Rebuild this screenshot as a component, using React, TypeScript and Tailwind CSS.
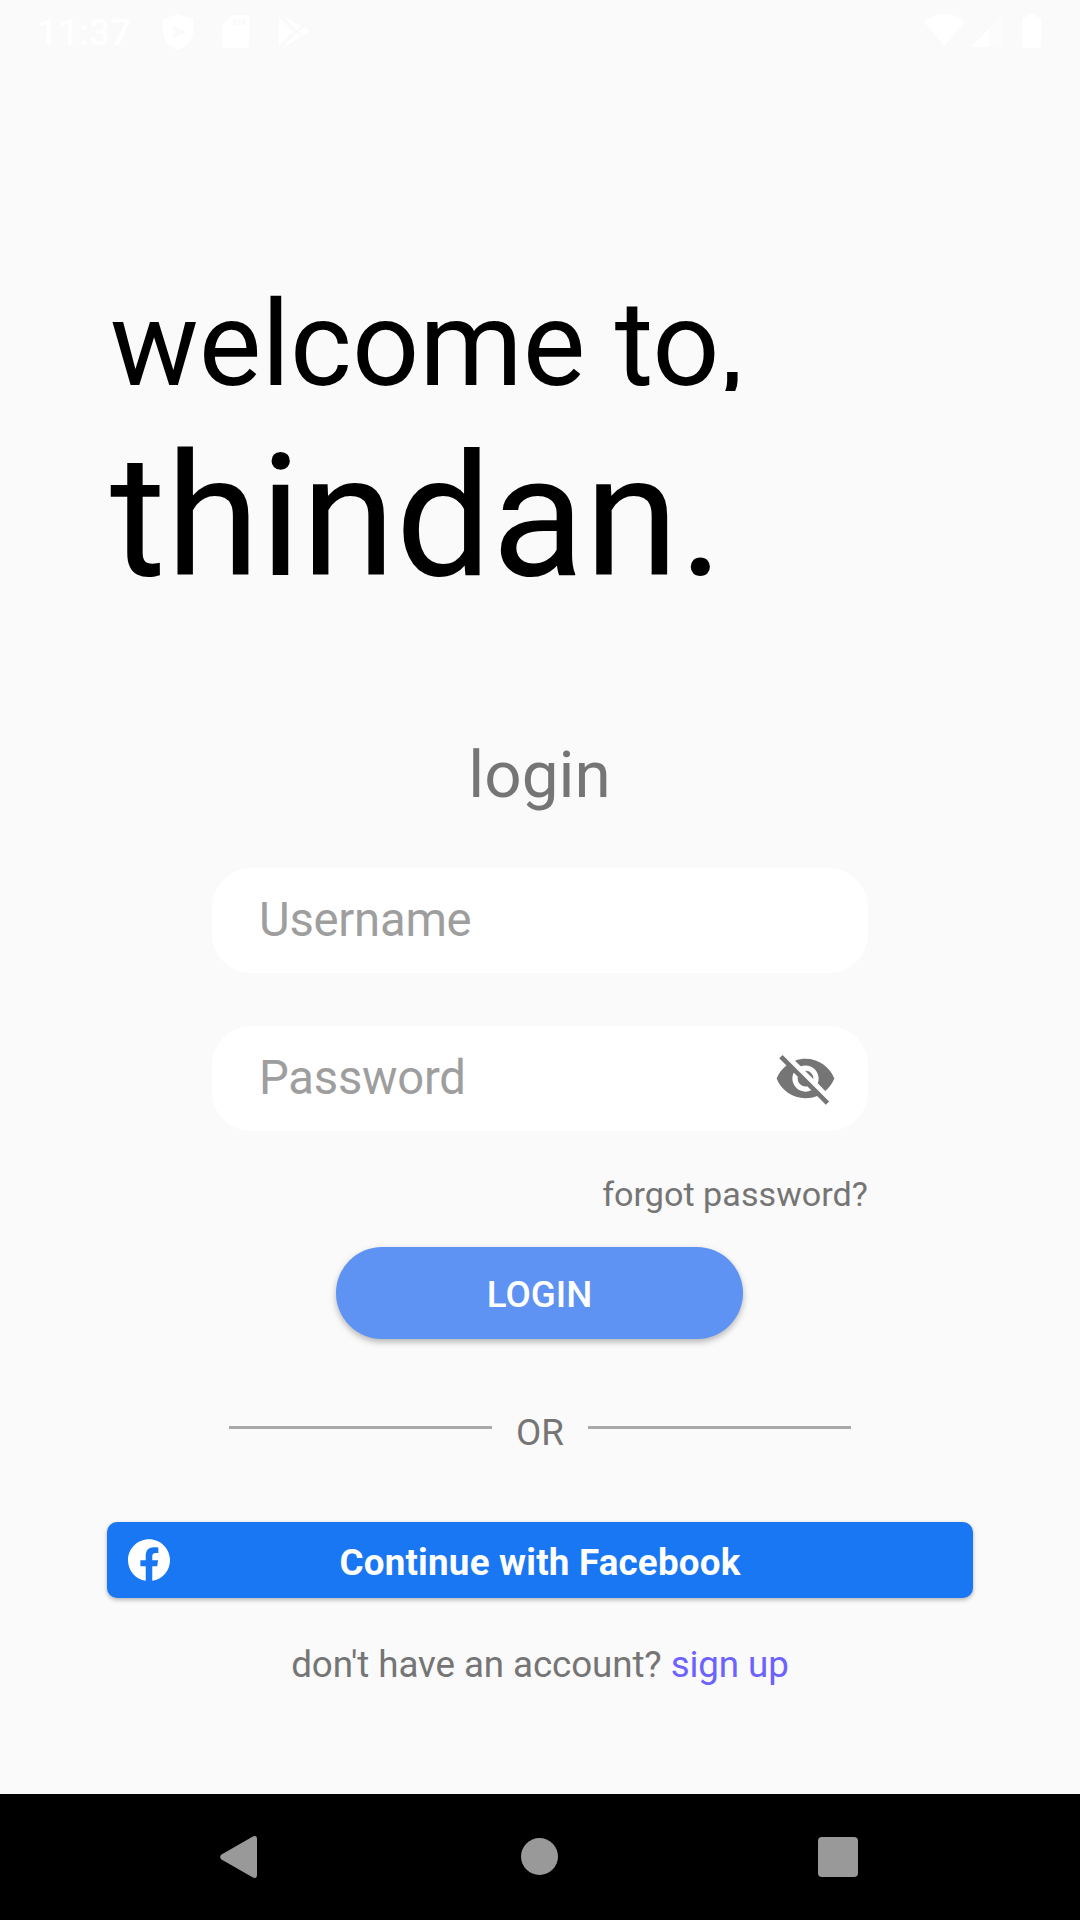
import React from "react";

function StatusBar() {
  return (
    <header className="flex h-[63px] items-start justify-between pl-[37px] pr-[39px] text-white">
      <div className="flex items-start">
        <span className="mt-[12px] w-[95px] whitespace-nowrap text-[36.75px] font-medium leading-[42px] tracking-[0.25px]">11:37</span>
        <svg className="ml-[31px] mt-[14px]" width="30" height="36" viewBox="0 0 30 36" fill="currentColor">
          <path fillRule="evenodd" d="M15 0 30 5.5V17c0 9-6.5 16-15 19C6.500 33 0 26 0 17V5.500ZM10 11.500v13L23.500 18Z" />
        </svg>
        <svg className="ml-[29px] mt-[15px]" width="27" height="33" viewBox="0 0 27 33" fill="currentColor">
          <path fillRule="evenodd" d="M10 0H24a3 3 0 0 1 3 3V30a3 3 0 0 1-3 3H3a3 3 0 0 1-3-3V10ZM11 4v6.500h3V4ZM15.700 4v6.500h3V4ZM20.400 4v6.500h3V4Z" />
        </svg>
        <svg className="ml-[30px] mt-[15px]" width="32" height="33" viewBox="0 0 32 33" fill="currentColor">
          <path d="M0 2.500 14.500 16.500 0 30.500ZM3 0 22 11.300 17.500 15.300ZM24 12.300 28.500 14.500Q31 16.500 28.500 18.500L24 20.700 19.300 16.500ZM3 33 22 21.700 17.500 17.700Z" />
        </svg>
      </div>
      <div className="flex items-start">
        <svg className="mt-[14px]" width="41" height="32" viewBox="0 0 41 32" fill="currentColor">
          <path d="M0 7.500C12-2.500 29-2.500 41 7.500L20.500 32Z" />
        </svg>
        <svg className="ml-[6px] mt-[15px]" width="31" height="32" viewBox="0 0 31 32" fill="currentColor">
          <path fillOpacity="0.35" d="M31 0V32H0Z" />
          <path d="M18 13.400V32H0Z" />
        </svg>
        <svg className="ml-[20px] mt-[14px]" width="19" height="34" viewBox="0 0 19 34" fill="currentColor">
          <path d="M5 0h9v3.500H17a2 2 0 0 1 2 2V32a2 2 0 0 1-2 2H2a2 2 0 0 1-2-2V5.500a2 2 0 0 1 2-2h3Z" />
        </svg>
      </div>
    </header>
  );
}

function EyeOffIcon() {
  return (
    <svg width="63" height="63" viewBox="0 0 24 24" fill="#757575">
      <path d="M12 7c2.760 0 5 2.240 5 5 0 .650-.130 1.260-.360 1.830l2.920 2.920c1.510-1.260 2.700-2.890 3.430-4.750-1.730-4.390-6-7.500-11-7.500-1.400 0-2.740.250-3.980.700l2.160 2.160C10.740 7.130 11.350 7 12 7zM2 4.270l2.280 2.280.460.460C3.080 8.300 1.780 10.020 1 12c1.730 4.390 6 7.500 11 7.500 1.550 0 3.030-.300 4.380-.840l.420.420L19.730 22 21 20.730 3.270 3 2 4.270zM7.530 9.800l1.550 1.550c-.050.210-.080.430-.080.650 0 1.660 1.340 3 3 3 .220 0 .440-.030.650-.080l1.550 1.550c-.670.330-1.410.530-2.200.530-2.760 0-5-2.240-5-5 0-.790.200-1.530.530-2.200zm4.310-.780l3.150 3.150.020-.160c0-1.660-1.340-3-3-3l-.170.010z" />
    </svg>
  );
}

function FacebookIcon() {
  return (
    <svg width="42" height="42" viewBox="0 0 24 24" fill="white">
      <path d="M24 12.073c0-6.627-5.373-12-12-12s-12 5.373-12 12c0 5.990 4.388 10.954 10.125 11.854v-8.385H7.078v-3.470h3.047V9.430c0-3.007 1.792-4.669 4.533-4.669 1.312 0 2.686.235 2.686.235v2.953H15.830c-1.491 0-1.956.925-1.956 1.874v2.250h3.328l-.532 3.470h-2.796v8.385C19.612 23.027 24 18.062 24 12.073z" />
    </svg>
  );
}

function Field({ label, children }: { label: string; children?: React.ReactNode }) {
  return (
    <div className="flex h-[105px] w-[656px] items-center justify-between rounded-[39px] bg-white pl-[47px] pr-[31px]">
      <span className="mb-[2px] text-[47.25px] leading-[56px] tracking-[-0.25px] text-[#9e9e9e]">{label}</span>
      {children}
    </div>
  );
}

export default function App() {
  return (
    <div className="flex h-[1920px] w-[1080px] flex-col overflow-hidden bg-[#fafafa] font-['Roboto',sans-serif] text-[#757575]">
      <StatusBar />
      <main className="flex flex-1 flex-col items-center">
        <div className="mt-[223px] w-full pl-[110px] text-black">
          <h1 className="h-[105px] overflow-hidden whitespace-nowrap text-[118.125px] leading-[118px]">welcome to,</h1>
          <p className="mt-[41px] whitespace-nowrap text-[170.625px] leading-[170px]">thindan.</p>
        </div>
        <h2 className="mr-[1px] mt-[133px] text-[65.625px] leading-[80px]">login</h2>
        <div className="mt-[53px] flex flex-col gap-[53px]">
          <Field label="Username" />
          <Field label="Password">
            <EyeOffIcon />
          </Field>
        </div>
        <div className="mt-[43px] flex w-[656px] justify-end">
          <a className="whitespace-nowrap text-[34.125px] leading-[40px] tracking-[0.03px]">forgot password?</a>
        </div>
        <button className="mr-[1px] mt-[33px] h-[92px] w-[407px] rounded-full bg-[#5e92f3] pt-[4px] text-[36.75px] font-medium leading-[44px] text-white shadow-[0_3px_6px_rgba(0,0,0,0.28)]">
          LOGIN
        </button>
        <div className="mt-[71px] flex h-[44px] w-[622px] items-start justify-between">
          <div className="mt-[16px] h-[3px] w-[263px] bg-[#a9a9a9]" />
          <span className="mt-[1px] text-[36.75px] leading-[44px]">OR</span>
          <div className="mt-[16px] h-[3px] w-[263px] bg-[#a9a9a9]" />
        </div>
        <button className="mt-[68px] grid h-[76px] w-[866px] grid-cols-[42px_1fr_42px] items-center rounded-[10px] bg-[#1977f3] px-[21px] text-white shadow-[0_2px_4px_rgba(0,0,0,0.28)]">
          <FacebookIcon />
          <span className="pt-[5px] text-center text-[36.75px] font-bold leading-[44px] tracking-[0.2px]">Continue with Facebook</span>
          <span />
        </button>
        <p className="mt-[45px] whitespace-nowrap text-[36.75px] leading-[44px] tracking-[-0.1px]">
          don't have an account? <a className="text-[#6c63ff]">sign up</a>
        </p>
      </main>
      <nav className="flex h-[126px] items-center justify-between bg-black pl-[220px] pr-[222px]">
        <svg width="37" height="42" viewBox="0 0 37 42" fill="#999">
          <path d="M32.500.7Q37-1.500 37 3V39Q37 43.500 32.500 41.300L1.500 23.500Q-1.200 21 1.500 18.500Z" />
        </svg>
        <div className="mb-[1px] ml-[3px] h-[37px] w-[37px] rounded-full bg-[#999]" />
        <div className="h-[40px] w-[40px] rounded-[4px] bg-[#999]" />
      </nav>
    </div>
  );
}
